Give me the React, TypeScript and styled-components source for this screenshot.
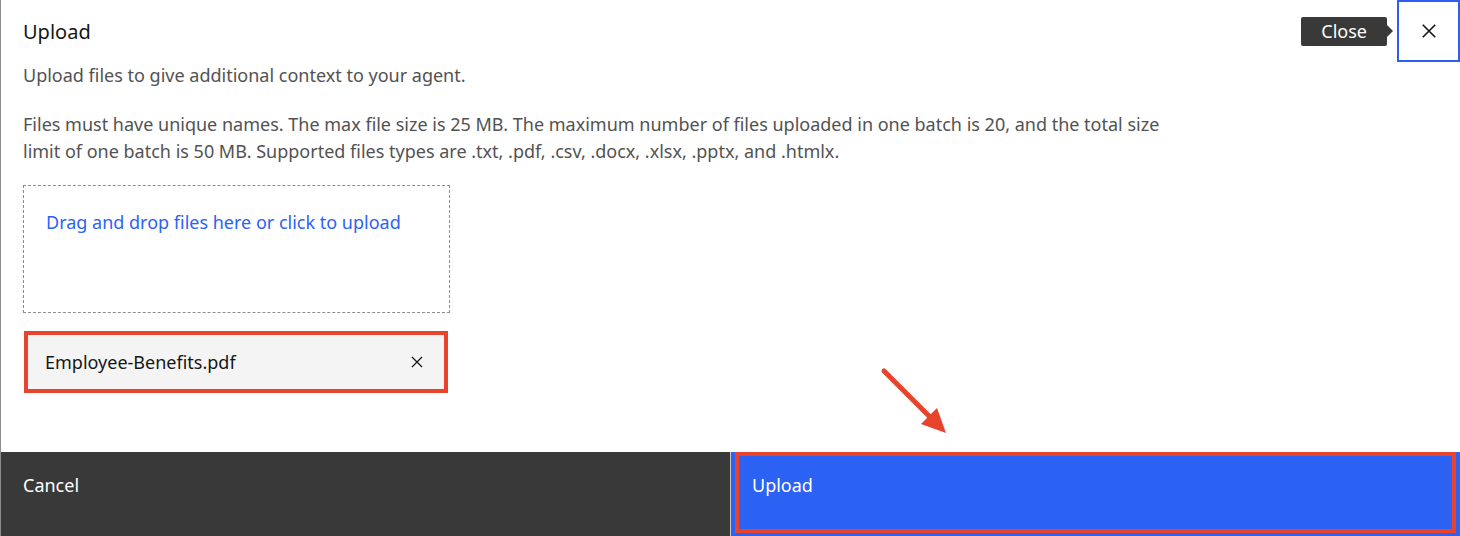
import React from 'react'
import styled, { createGlobalStyle } from 'styled-components'

const GlobalStyle = createGlobalStyle`
  html, body {
    margin: 0;
    padding: 0;
    background: #ffffff;
  }
  body {
    font-family: "Noto Sans", "Open Sans", sans-serif;
  }
  * {
    box-sizing: border-box;
  }
`

const Modal = styled.div`
  position: relative;
  width: 1460px;
  height: 536px;
  display: flex;
  flex-direction: column;
  background: #ffffff;
  border-left: 1px solid #8d8d8d;
  overflow: hidden;
`

const Header = styled.div`
  display: flex;
  justify-content: space-between;
  align-items: flex-start;
  padding-left: 22px;
`

const Title = styled.h2`
  margin: 18px 0 0;
  font-size: 20px;
  line-height: 28px;
  font-weight: 400;
  color: #161616;
`

const CloseArea = styled.div`
  display: flex;
  align-items: center;
  gap: 10px;
`

const Tooltip = styled.div`
  position: relative;
  height: 29px;
  padding: 0 20px;
  display: flex;
  align-items: center;
  background: #393939;
  color: #ffffff;
  font-size: 18px;
  border-radius: 2px;
  &::after {
    content: '';
    position: absolute;
    right: -6px;
    top: 50%;
    transform: translateY(-50%);
    border-top: 6px solid transparent;
    border-bottom: 6px solid transparent;
    border-left: 6px solid #393939;
  }
`

const CloseButton = styled.button`
  width: 63px;
  height: 62px;
  border: 2px solid #2c5ff0;
  background: #ffffff;
  display: flex;
  align-items: center;
  justify-content: center;
  padding: 0;
  cursor: pointer;
`

const Body = styled.div`
  flex: 1;
  padding: 0 22px;
  color: #525252;
  font-size: 18px;
  line-height: 27px;
`

const Lead = styled.p`
  margin: 0;
`

const Note = styled.p`
  margin: 22px 0 0;
  max-width: 1165px;
`

const DropZone = styled.div`
  margin-top: 20px;
  width: 427px;
  height: 128px;
  border: 1px dashed #8d8d8d;
  padding: 23px 22px;
  color: #2c62f4;
  font-size: 18px;
  line-height: 26px;
  cursor: pointer;
`

const FileItem = styled.div`
  margin-top: 18px;
  margin-left: 1px;
  width: 424px;
  height: 62px;
  border: 4px solid #e8432c;
  background: #f4f4f4;
  display: flex;
  align-items: center;
  justify-content: space-between;
  padding: 0 19px 0 17px;
  color: #161616;
  font-size: 18px;
`

const IconButton = styled.button`
  border: none;
  background: transparent;
  padding: 0;
  display: flex;
  align-items: center;
  cursor: pointer;
`

const Footer = styled.div`
  height: 84px;
  display: grid;
  grid-template-columns: 729px 1fr;
  column-gap: 1px;
  background: #c6c6c6;
`

const FooterButton = styled.button<{ primary?: boolean }>`
  position: relative;
  border: none;
  margin: 0;
  text-align: left;
  display: flex;
  align-items: flex-start;
  padding: 20px 22px 0;
  font-family: inherit;
  font-size: 18px;
  line-height: 26px;
  color: #ffffff;
  background: ${p => (p.primary ? '#2c62f4' : '#393939')};
  padding-left: ${p => (p.primary ? '21px' : '22px')};
  cursor: pointer;
`

const Highlight = styled.span`
  position: absolute;
  left: 4px;
  top: 0;
  right: 4px;
  bottom: 3px;
  border: 4px solid #e8432c;
  pointer-events: none;
`

const Arrow = styled.svg`
  position: absolute;
  left: 878px;
  top: 366px;
  pointer-events: none;
`

const CloseIcon = ({ size }: { size: number }) => (
  <svg width={size} height={size} viewBox="0 0 16 16" fill="none">
    <path d="M3 3 L13 13 M13 3 L3 13" stroke="#161616" strokeWidth="1.3" />
  </svg>
)

export default function App() {
  return (
    <>
      <GlobalStyle />
      <Modal>
        <Header>
          <Title>Upload</Title>
          <CloseArea>
            <Tooltip>Close</Tooltip>
            <CloseButton aria-label="Close">
              <CloseIcon size={20} />
            </CloseButton>
          </CloseArea>
        </Header>
        <Body>
          <Lead>Upload files to give additional context to your agent.</Lead>
          <Note>
            Files must have unique names. The max file size is 25 MB. The maximum number of files uploaded in one batch
            is 20, and the total size limit of one batch is 50 MB. Supported files types are .txt, .pdf, .csv, .docx,
            .xlsx, .pptx, and .htmlx.
          </Note>
          <DropZone>Drag and drop files here or click to upload</DropZone>
          <FileItem>
            <span>Employee-Benefits.pdf</span>
            <IconButton aria-label="Remove file">
              <CloseIcon size={16} />
            </IconButton>
          </FileItem>
        </Body>
        <Footer>
          <FooterButton>Cancel</FooterButton>
          <FooterButton primary>
            Upload
            <Highlight />
          </FooterButton>
        </Footer>
        <Arrow width="72" height="72" viewBox="0 0 72 72">
          <path d="M5 5 L52 52" stroke="#e8432c" strokeWidth="5" strokeLinecap="round" />
          <path d="M67 67 L42 58 L58 42 Z" fill="#e8432c" />
        </Arrow>
      </Modal>
    </>
  )
}
